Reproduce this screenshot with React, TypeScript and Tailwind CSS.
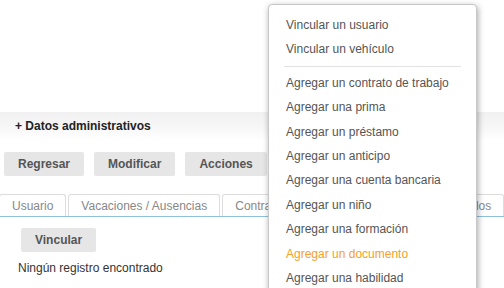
import React from "react";

const menuItems = [
  "Agregar un contrato de trabajo",
  "Agregar una prima",
  "Agregar un préstamo",
  "Agregar un anticipo",
  "Agregar una cuenta bancaria",
  "Agregar un niño",
  "Agregar una formación",
  "Agregar un documento",
  "Agregar una habilidad",
];

function Button({ label, className = "" }: { label: string; className?: string }) {
  return (
    <button
      type="button"
      className={`h-[24px] rounded-[2px] bg-[#e6e6e6] px-[14px] text-[12px] font-bold text-[#555] ${className}`}
    >
      {label}
    </button>
  );
}

function Tab({ label, className = "" }: { label: string; className?: string }) {
  return (
    <div
      className={`flex h-[22px] shrink-0 items-center whitespace-nowrap rounded-t-[3px] border border-b-0 border-[#dddddd] px-[12px] text-[12px] text-[#888] ${className}`}
    >
      {label}
    </div>
  );
}

function ActionsMenu() {
  return (
    <div className="absolute left-[268px] top-[4px] w-[209px] rounded-[4px] border border-[#c8c8c8] bg-white pb-[20px] pt-[8px] shadow-[1px_2px_6px_rgba(0,0,0,0.35)]">
      <div className="px-[17px] text-[12px] leading-[24.4px] text-[#555]">Vincular un usuario</div>
      <div className="px-[17px] text-[12px] leading-[24.4px] text-[#555]">Vincular un vehículo</div>
      <div className="mx-[15px] mb-[4px] mt-[4px] h-px bg-[#e2e2e2]" />
      {menuItems.map((item) => (
        <div
          key={item}
          className={`px-[17px] text-[12px] leading-[24.4px] ${
            item === "Agregar un documento" ? "text-[#f5a028]" : "text-[#555]"
          }`}
        >
          {item}
        </div>
      ))}
    </div>
  );
}

export default function App() {
  return (
    <div
      className="relative h-[288px] w-[504px] overflow-hidden bg-white"
      style={{ fontFamily: '"Liberation Sans", Arial, sans-serif' }}
    >
      <div className="h-[112px]" />
      <div className="flex h-[28px] items-center bg-gradient-to-b from-[#f1f1f1] via-[#f6f6f6] to-white pl-[15px] text-[12px] font-bold text-[#222]">
        + Datos administrativos
      </div>
      <div className="mt-[12px] flex gap-[10px] pl-[4px]">
        <Button label="Regresar" />
        <Button label="Modificar" />
        <Button label="Acciones" />
      </div>
      <div className="mt-[18px] flex gap-[2px] overflow-hidden border-b border-[#8fc0dd]">
        <Tab label="Usuario" className="-ml-[1px]" />
        <Tab label="Vacaciones / Ausencias" />
        <Tab label="Contratos" className="w-[104px]" />
        <Tab label="Documentos" className="w-[96px]" />
        <Tab label="Vehículos" />
      </div>
      <div className="mt-[10px] pl-[21px]">
        <button
          type="button"
          className="h-[24px] rounded-[2px] bg-[#e6e6e6] px-[14px] text-[12px] font-bold text-[#555]"
        >
          Vincular
        </button>
      </div>
      <p className="mt-[7px] pl-[18px] text-[12px] text-[#333]">Ningún registro encontrado</p>
      <ActionsMenu />
    </div>
  );
}
